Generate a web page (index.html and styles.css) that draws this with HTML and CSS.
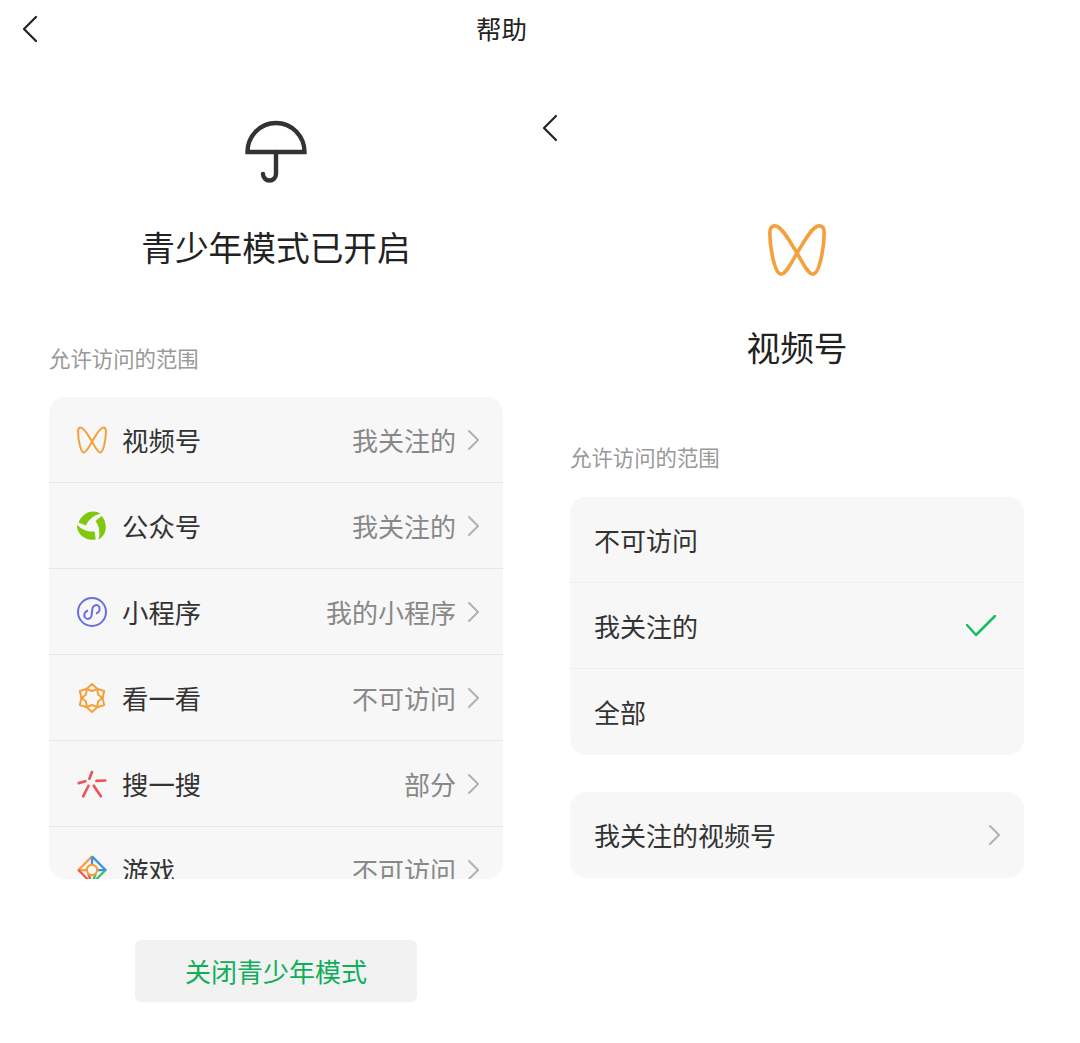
FILE: index.html
```html
<!DOCTYPE html>
<html lang="zh-CN">
<head>
    <meta charset="UTF-8">
    <meta name="viewport" content="width=device-width, initial-scale=1.0">
    <title>帮助</title>
    <link rel="stylesheet" href="styles.css">
</head>
<body>
    <div class="topbar">
        <svg class="back" viewBox="0 0 16 28"><polyline points="14,2 2,14 14,26"/></svg>
        <div class="topbar-title">帮助</div>
    </div>

    <div class="panels">
        <!-- left: teen mode overview -->
        <div class="panel">
            <svg class="umbrella" viewBox="0 0 62 64">
                <path d="M2.500 32 A28.500 29 0 0 1 59.500 32 Z"/>
                <path d="M31 32 V54 a6.500 6.500 0 0 1 -13 0"/>
            </svg>
            <h1 class="title">青少年模式已开启</h1>
            <div class="section">允许访问的范围</div>
            <div class="card card-scroll">
                <div class="row">
                    <svg class="row-icon" viewBox="0 0 58 52"><path class="wings thick" d="M7 2 C14 2 22 18 29 29 C36 41 40 50 45 50 C51 50 56 24 56 9 C56 4 54 2 51 2 C44 2 36 18 29 29 C22 41 18 50 13 50 C7 50 2 24 2 9 C2 4 4 2 7 2 Z"/></svg>
                    <span class="row-label">视频号</span>
                    <span class="row-value">我关注的</span>
                    <svg class="chevron" viewBox="0 0 12 20"><polyline points="2,1 11,10 2,19"/></svg>
                </div>
                <div class="row">
                    <svg class="row-icon" viewBox="0 0 30 30">
                        <g class="blades">
                            <path id="blade" d="M1.500 11.500 C4 5 10 0.500 16 0.500 C19 0.500 21.500 1.200 23.500 2.500 C16 5 11.500 8.500 9 14.500 Z"/>
                            <use href="#blade" transform="rotate(120 15 15)"/>
                            <use href="#blade" transform="rotate(240 15 15)"/>
                        </g>
                    </svg>
                    <span class="row-label">公众号</span>
                    <span class="row-value">我关注的</span>
                    <svg class="chevron" viewBox="0 0 12 20"><polyline points="2,1 11,10 2,19"/></svg>
                </div>
                <div class="row">
                    <svg class="row-icon" viewBox="0 0 30 30">
                        <g class="mini">
                            <circle cx="15" cy="15" r="14"/>
                            <path d="M11 13.500 C7.500 14.500 6.500 18 8 20.500 C10 23 13.500 22 14.500 19 L15.500 11 C16.500 8 20 7 22 9.500 C23.500 12 22.500 15.500 19 16.500"/>
                        </g>
                    </svg>
                    <span class="row-label">小程序</span>
                    <span class="row-value">我的小程序</span>
                    <svg class="chevron" viewBox="0 0 12 20"><polyline points="2,1 11,10 2,19"/></svg>
                </div>
                <div class="row">
                    <svg class="row-icon" viewBox="0 0 30 30">
                        <g class="star">
                            <polygon id="petal" points="15,1 20.500,6 15,8 9.500,6"/>
                            <use href="#petal" transform="rotate(60 15 15)"/>
                            <use href="#petal" transform="rotate(120 15 15)"/>
                            <use href="#petal" transform="rotate(180 15 15)"/>
                            <use href="#petal" transform="rotate(240 15 15)"/>
                            <use href="#petal" transform="rotate(300 15 15)"/>
                        </g>
                    </svg>
                    <span class="row-label">看一看</span>
                    <span class="row-value">不可访问</span>
                    <svg class="chevron" viewBox="0 0 12 20"><polyline points="2,1 11,10 2,19"/></svg>
                </div>
                <div class="row">
                    <svg class="row-icon" viewBox="0 0 34 32">
                        <g class="rays">
                            <line x1="17" y1="2.500" x2="14" y2="10"/>
                            <line x1="22" y1="12.500" x2="32" y2="12"/>
                            <line x1="2" y1="15" x2="9.500" y2="12.800"/>
                            <line x1="7" y1="30" x2="13" y2="18"/>
                            <line x1="27" y1="30" x2="19" y2="18"/>
                        </g>
                    </svg>
                    <span class="row-label">搜一搜</span>
                    <span class="row-value">部分</span>
                    <svg class="chevron" viewBox="0 0 12 20"><polyline points="2,1 11,10 2,19"/></svg>
                </div>
                <div class="row">
                    <svg class="row-icon" viewBox="0 0 32 32">
                        <g class="game">
                            <path class="g-orange" d="M16 1.500 L1.500 16 L10 16"/>
                            <path class="g-blue" d="M16 1.500 L30.500 16 L22 16 M16 1.500 V10"/>
                            <path class="g-green" d="M30.500 16 L16 30.500 L20 20"/>
                            <path class="g-red" d="M1.500 16 L16 30.500 L12 20"/>
                            <circle cx="16" cy="16" r="5.500"/>
                        </g>
                    </svg>
                    <span class="row-label">游戏</span>
                    <span class="row-value">不可访问</span>
                    <svg class="chevron" viewBox="0 0 12 20"><polyline points="2,1 11,10 2,19"/></svg>
                </div>
            </div>
            <button class="close-btn">关闭青少年模式</button>
        </div>

        <!-- right: channel access detail -->
        <div class="panel">
            <svg class="back back-inner" viewBox="0 0 16 28"><polyline points="14,2 2,14 14,26"/></svg>
            <svg class="butterfly" viewBox="0.200 0.200 57.600 51.600"><path class="wings" d="M7 2 C14 2 22 18 29 29 C36 41 40 50 45 50 C51 50 56 24 56 9 C56 4 54 2 51 2 C44 2 36 18 29 29 C22 41 18 50 13 50 C7 50 2 24 2 9 C2 4 4 2 7 2 Z"/></svg>
            <h1 class="title title-detail">视频号</h1>
            <div class="section section-detail">允许访问的范围</div>
            <div class="card card-plain">
                <div class="row row-plain"><span class="row-label">不可访问</span></div>
                <div class="row row-plain">
                    <span class="row-label">我关注的</span>
                    <svg class="check" viewBox="0 0 30 22"><polyline points="1,10 10,20 29,1"/></svg>
                </div>
                <div class="row row-plain"><span class="row-label">全部</span></div>
            </div>
            <div class="card card-plain card-next">
                <div class="row row-plain">
                    <span class="row-label">我关注的视频号</span>
                    <svg class="chevron" viewBox="0 0 12 20"><polyline points="2,1 11,10 2,19"/></svg>
                </div>
            </div>
        </div>
    </div>
</body>
</html>
```

FILE: styles.css
```css
body {
    margin: 0;
    background: #fff;
    color: #333;
    font-family: "Noto Sans CJK SC", "Noto Sans", sans-serif;
}
.topbar {
    display: flex;
    height: 60px;
    padding: 15px 0 0 22px;
    box-sizing: border-box;
}
.topbar-title {
    margin: -4px 0 0 438px;
    font-size: 25.500px;
    line-height: 34px;
    color: #222;
}
.back {
    display: block;
    width: 16px;
    height: 28px;
}
.back polyline {
    fill: none;
    stroke: #222;
    stroke-width: 2.200;
    stroke-linecap: round;
    stroke-linejoin: round;
}
.back-inner {
    margin: 54px 0 0 -28px;
}
.panels {
    display: flex;
    gap: 67px;
    padding-left: 49px;
}
.panel {
    width: 454px;
    display: flex;
    flex-direction: column;
}
.umbrella {
    display: block;
    width: 62px;
    height: 64px;
    margin: 60px auto 0;
}
.umbrella path {
    fill: none;
    stroke: #333;
    stroke-width: 4.400;
    stroke-linecap: round;
}
.butterfly {
    display: block;
    width: 58px;
    height: 52px;
    margin: 82px auto 0;
}
.wings {
    fill: none;
    stroke: #f4a03c;
    stroke-width: 3.600;
}
.wings.thick {
    stroke-width: 3.800;
}
.title {
    margin: 39px 0 2px;
    font-size: 33.700px;
    font-weight: 400;
    line-height: 48px;
    text-align: center;
    color: #222;
}
.title-detail {
    margin: 47px 0 1px;
}
.section {
    margin: 70px 0 24px;
    font-size: 21.400px;
    line-height: 30px;
    color: #999;
}
.section-detail {
    margin-bottom: 25px;
}
.card {
    background: #f7f7f7;
    border-radius: 16px;
    overflow: hidden;
}
.card-scroll {
    height: 482px;
}
.card-plain {
    padding-bottom: 1px;
}
.card-next {
    margin-top: 37px;
}
.row {
    display: flex;
    align-items: center;
    height: 86px;
    padding: 0 24px 0 28px;
    box-sizing: border-box;
    border-top: 1px solid #e6e6e6;
}
.row:first-child {
    height: 85px;
    border-top: none;
}
.row-plain {
    padding: 0 24px;
    border-top-color: #eee;
}
.row-icon {
    width: 30px;
    height: 30px;
    margin-right: 15px;
    flex-shrink: 0;
}
.row-label {
    flex: 1;
    font-size: 26.400px;
    line-height: 36px;
    color: #333;
}
.row-plain .row-label {
    font-size: 26px;
}
.row-value {
    font-size: 26px;
    line-height: 36px;
    color: #888;
}
.chevron {
    width: 12px;
    height: 20px;
    margin-left: 11px;
}
.chevron polyline {
    fill: none;
    stroke: #b2b2b2;
    stroke-width: 2;
    stroke-linecap: round;
    stroke-linejoin: round;
}
.check {
    width: 30px;
    height: 22px;
    margin-right: 4px;
}
.check polyline {
    fill: none;
    stroke: #15bd63;
    stroke-width: 2.500;
    stroke-linecap: round;
    stroke-linejoin: round;
}
.blades {
    fill: #7fc80e;
}
.mini {
    fill: none;
    stroke: #6a6ee0;
    stroke-width: 2;
}
.star {
    fill: none;
    stroke: #f4a03c;
    stroke-width: 2;
    stroke-linejoin: round;
}
.rays {
    stroke: #ef5358;
    stroke-width: 3;
    stroke-linecap: round;
}
.game {
    fill: none;
    stroke-width: 2.400;
    stroke-linejoin: round;
}
.game circle {
    stroke: #f4a03c;
}
.g-orange { stroke: #f4a03c; }
.g-blue { stroke: #3b8fe8; }
.g-green { stroke: #2cc26e; }
.g-red { stroke: #ef5358; }
.close-btn {
    display: block;
    width: 282px;
    height: 62px;
    margin: 61px auto 0;
    padding: 0 0 2px;
    border: none;
    border-radius: 6px;
    background: #f2f2f2;
    font-family: inherit;
    font-size: 26px;
    color: #10ae5a;
}
```
